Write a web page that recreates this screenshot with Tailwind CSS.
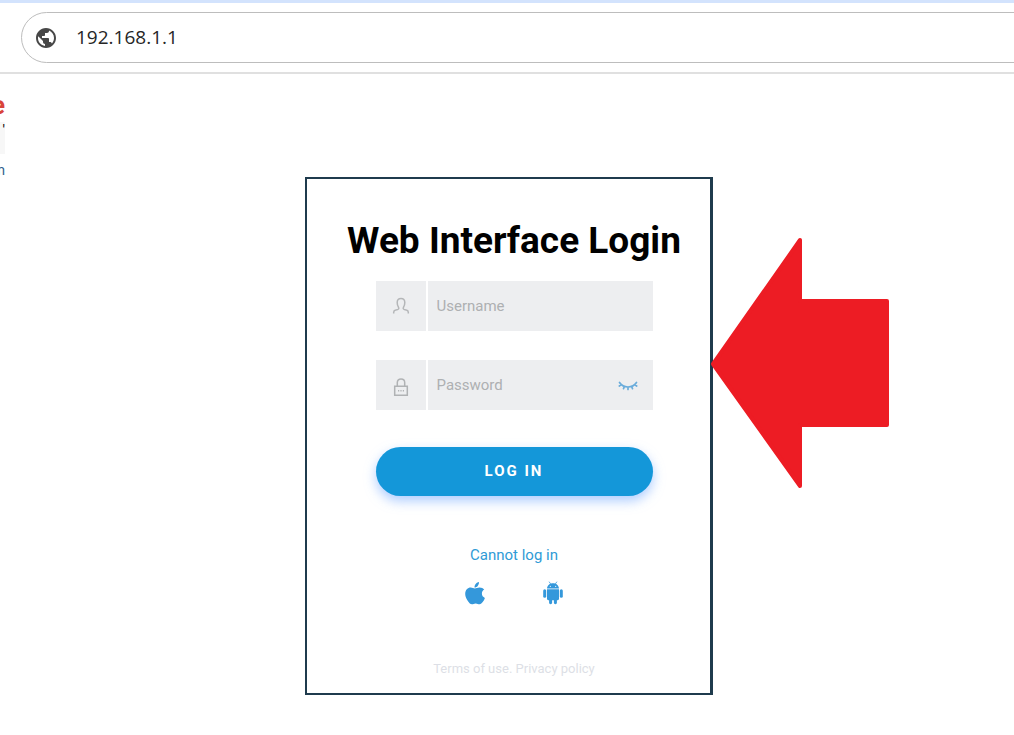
<!DOCTYPE html>
<html lang="en">
<head>
    <meta charset="UTF-8">
    <meta name="viewport" content="width=device-width, initial-scale=1.0">
    <title>Web Interface Login</title>
    <script src="https://cdn.jsdelivr.net/npm/@tailwindcss/browser@4"></script>
</head>
<body class="min-h-screen overflow-x-hidden bg-white font-['Roboto',sans-serif]">

    <!-- Address bar -->
    <header class="border-t-3 border-b-2 border-t-[#d3e3fd] border-b-[#e0e0e0] pt-[9px] pb-[9px] pl-[21px]">
        <div class="-mr-10 flex h-[51px] items-center gap-[18px] rounded-full border border-[#bdbdbd] pl-3">
            <svg class="size-6 shrink-0" viewBox="0 0 24 24" fill="#474747" aria-hidden="true">
                <path d="M12 2C6.48 2 2 6.48 2 12s4.48 10 10 10 10-4.48 10-10S17.52 2 12 2zm-1 17.930c-3.950-.49-7-3.850-7-7.930 0-.62.08-1.210.21-1.790L9 15v1c0 1.100.9 2 2 2v1.930zm6.900-2.540c-.26-.81-1-1.390-1.900-1.390h-1v-3c0-.55-.45-1-1-1H8v-2h2c.55 0 1-.45 1-1V7h2c1.100 0 2-.9 2-2v-.41c2.930 1.190 5 4.060 5 7.410 0 2.080-.8 3.970-2.100 5.390z"/>
            </svg>
            <input type="text" aria-label="Address" value="192.168.1.1" class="min-w-0 flex-1 font-['Open_Sans',sans-serif] text-[19px] text-[#262626] outline-none">
        </div>
    </header>

    <main class="relative flex justify-center pt-[103px] pb-10 pl-1">

        <!-- Edge of the page behind -->
        <div class="absolute top-[14px] left-0 flex w-[5px] flex-col items-end overflow-hidden" aria-hidden="true">
            <span class="h-[34px] text-[26px] leading-[34px] font-bold text-[#d9443a]">e</span>
            <span class="flex h-8 w-full justify-end bg-[#f7f7f7] text-sm leading-4 text-black">'</span>
            <span class="h-6 text-sm leading-8 text-[#2f5f8f]">m</span>
        </div>

        <section class="relative w-[408px] border-2 border-r-3 border-[#1f3b4d] pt-[42px] pb-[14px] pl-[11px]">
            <h1 class="text-center text-[37px] leading-10 font-bold whitespace-nowrap text-black">Web Interface Login</h1>

            <form class="mx-auto mt-5 flex w-[277px] flex-col">
                <div class="flex h-[50px] gap-[2px]">
                    <label for="username" class="flex w-[50px] items-center justify-center bg-[#edeef0]">
                        <span class="sr-only">Username</span>
                        <svg class="h-[18px] w-[18px]" viewBox="0 0 18 18" fill="none" stroke="#b4b6b8" stroke-width="1.500" aria-hidden="true">
                            <path d="M1.700 16.500v-1.200c0-1.300.8-1.900 2-2.200l2-.6c1.200-.4 1.400-1.200.8-2.200C5.600 9 5.200 7.500 5.200 5.500 5.200 3 6.700 1.500 9 1.500s3.800 1.500 3.800 4c0 2-.4 3.500-1.300 4.800-.6 1-.4 1.800.8 2.200l2 .6c1.200.3 2 .9 2 2.200v1.200"/>
                        </svg>
                    </label>
                    <input id="username" type="text" placeholder="Username" class="min-w-0 flex-1 bg-[#edeef0] px-[9px] text-[15px] leading-6 text-gray-700 outline-none placeholder:text-[#aeb0b2]">
                </div>

                <div class="relative mt-[29px] flex h-[50px] gap-[2px]">
                    <label for="password" class="flex w-[50px] items-center justify-center bg-[#edeef0]">
                        <span class="sr-only">Password</span>
                        <svg class="mt-1 h-[18px] w-[18px]" viewBox="0 0 18 18" fill="none" stroke="#b0b2b4" stroke-width="1.500" aria-hidden="true">
                            <path d="M2.700 8.200h12.600v9H2.700zM5.300 8V4.500C5.300 2.300 6.800.9 9 .9s3.700 1.400 3.700 3.600V8"/>
                            <path d="M6 12.700h1.200M8.400 12.700h1.200M10.800 12.700H12"/>
                        </svg>
                    </label>
                    <input id="password" type="password" placeholder="Password" class="min-w-0 flex-1 bg-[#edeef0] pr-12 pl-[9px] text-[15px] leading-6 text-gray-700 outline-none placeholder:text-[#aeb0b2]">
                    <button type="button" aria-label="Show password" class="absolute inset-y-0 right-[15px] flex items-center">
                        <svg class="h-5 w-5" viewBox="0 0 20 20" fill="none" stroke="#6aacdb" stroke-width="1.700" stroke-linecap="round" aria-hidden="true">
                            <path d="M1.500 7.500C3.500 10.500 6.500 12 10 12s6.500-1.500 8.500-4.500M3.500 9.600L1.300 11M6.500 11.400l-1 2.300M10 12v2.500M13.500 11.400l1 2.300M16.500 9.600l2.200 1.400"/>
                        </svg>
                    </button>
                </div>

                <button type="submit" class="mt-[37px] h-[49px] rounded-full bg-[#1497d9] text-[15px] font-bold tracking-[2px] text-white shadow-[0_5px_12px_#78abff99]">LOG IN</button>
            </form>

            <div class="mt-[49px] text-center text-[15px] leading-5">
                <a href="#" class="text-[#2f9bd6]">Cannot log in</a>
            </div>

            <div class="mt-4 flex justify-center gap-[54px]">
                <a href="#" aria-label="iOS app">
                    <svg class="h-6 w-6" viewBox="0 0 24 24" fill="#3498db" aria-hidden="true">
                        <path d="M16 1c.1 1.500-.4 2.800-1.300 3.900-.9 1-2 1.600-3.200 1.500-.1-1.400.5-2.700 1.400-3.700C13.700 1.800 15 1.100 16 1z"/>
                        <path d="M21.200 8.600c-1.500 1-2.300 2.300-2.300 4 0 2 1.100 3.600 3 4.300-.5 1.500-1.200 2.900-2.200 4.200-.9 1.200-1.800 2.100-3.200 2.100s-2-.8-3.800-.8-2.500.8-3.800.8-2.300-1-3.300-2.300C3.600 18.500 2.200 15.700 2.200 13c0-4 2.600-6.400 5.500-6.400 1.600 0 3 .9 4.200.9 1.100 0 2.700-1 4.700-1 1.900 0 3.600.8 4.600 2.100z"/>
                    </svg>
                </a>
                <a href="#" aria-label="Android app">
                    <svg class="h-6 w-6" viewBox="0 0 24 24" fill="#3498db" aria-hidden="true">
                        <path d="M8.300 1l1.400 2M15.700 1l-1.400 2" stroke="#3498db" stroke-width=".8" stroke-linecap="round"/>
                        <path d="M6 7.600C6.200 4.300 8.700 2.200 12 2.200s5.800 2.100 6 5.400zM9.300 4.700a.6.6 0 1 0 0 1.200.6.6 0 0 0 0-1.200zm5.400 0a.6.6 0 1 0 0 1.200.6.6 0 0 0 0-1.200z" fill-rule="evenodd"/>
                        <path d="M6 8.300h12v9.500c0 .8-.6 1.400-1.400 1.400H7.400c-.8 0-1.400-.6-1.400-1.400z"/>
                        <rect x="2.200" y="8.200" width="3" height="8.500" rx="1.500"/>
                        <rect x="18.800" y="8.200" width="3" height="8.500" rx="1.500"/>
                        <rect x="8.100" y="17" width="3" height="6.200" rx="1.400"/>
                        <rect x="12.900" y="17" width="3" height="6.200" rx="1.400"/>
                    </svg>
                </a>
            </div>

            <footer class="mt-[54px] text-center text-[13px] leading-5 text-[#dddfe6]">
                <a href="#">Terms of use.</a>
                <a href="#">Privacy policy</a>
            </footer>

            <!-- Pointer to the login box -->
            <svg class="absolute top-[58px] left-[403px] h-[254px] w-[180px]" viewBox="0 0 180 254" fill="#ed1c24" stroke="#ed1c24" stroke-width="4" stroke-linejoin="round" aria-hidden="true">
                <path d="M3 127L90 3v61h87v124H90v61z"/>
            </svg>
        </section>
    </main>

</body>
</html>
